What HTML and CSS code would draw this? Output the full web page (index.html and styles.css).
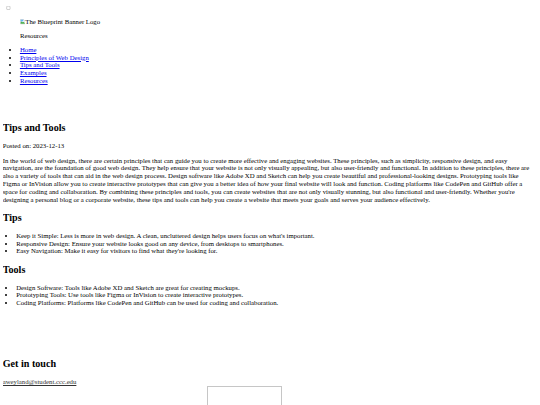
FILE: index.html
```html
<!DOCTYPE html>
<html lang="en">
<head>
<meta charset="utf-8">
<title>Tips and Tools</title>
<link rel="stylesheet" href="styles.css">
</head>
<body>
<header class="site-header">
  <input type="checkbox" class="menu-toggle" aria-label="Toggle menu">
  <p class="logo"><svg class="broken" viewBox="0 0 16 16" width="16" height="16" aria-hidden="true"><path d="M1.5 1.5h9l4 4v9h-13z" fill="#fff" stroke="#9a9a9a"/><path d="M2 14V10l3-3 3 3 2-2 4 4v2z" fill="#4caf50"/><path d="M2 2h8v5H2z" fill="#64b5f6"/></svg>The Blueprint Banner Logo</p>
  <p class="menu-title">Resources</p>
  <nav>
    <ul class="nav-list">
      <li><a href="#">Home</a></li>
      <li><a href="#">Principles of Web Design</a></li>
      <li><a href="#">Tips and Tools</a></li>
      <li><a href="#">Examples</a></li>
      <li><a href="#">Resources</a></li>
    </ul>
  </nav>
</header>
<main class="content">
  <h2 class="title">Tips and Tools</h2>
  <p>Posted on: 2023-12-13</p>
  <p>In the world of web design, there are certain principles that can guide you to create more effective and engaging websites. These principles, such as simplicity, responsive design, and easy navigation, are the foundation of good web design. They help ensure that your website is not only visually appealing, but also user-friendly and functional. In addition to these principles, there are also a variety of tools that can aid in the web design process. Design software like Adobe XD and Sketch can help you create beautiful and professional-looking designs. Prototyping tools like Figma or InVision allow you to create interactive prototypes that can give you a better idea of how your final website will look and function. Coding platforms like CodePen and GitHub offer a space for coding and collaboration. By combining these principles and tools, you can create websites that are not only visually stunning, but also functional and user-friendly. Whether you're designing a personal blog or a corporate website, these tips and tools can help you create a website that meets your goals and serves your audience effectively.</p>
  <h2>Tips</h2>
  <ul>
    <li>Keep it Simple: Less is more in web design. A clean, uncluttered design helps users focus on what's important.</li>
    <li>Responsive Design: Ensure your website looks good on any device, from desktops to smartphones.</li>
    <li>Easy Navigation: Make it easy for visitors to find what they're looking for.</li>
  </ul>
  <h2>Tools</h2>
  <ul>
    <li>Design Software: Tools like Adobe XD and Sketch are great for creating mockups.</li>
    <li>Prototyping Tools: Use tools like Figma or InVision to create interactive prototypes.</li>
    <li>Coding Platforms: Platforms like CodePen and GitHub can be used for coding and collaboration.</li>
  </ul>
</main>
<footer class="site-footer">
  <h2>Get in touch</h2>
  <p class="contact"><a class="email" href="mailto:aweyland@student.ccc.edu">aweyland@student.ccc.edu</a></p>
  <div class="map-box"></div>
</footer>
</body>
</html>
```

FILE: styles.css
```css
html {
  zoom: 0.3375;
}
body {
  margin: 8px;
  font-family: "Liberation Serif", "Times New Roman", serif;
  font-size: 20px;
  line-height: 23px;
  color: #000;
  background: #fff;
}
a {
  color: #0000ee;
}
p {
  margin: 20px 0;
}
.menu-toggle {
  display: block;
  margin: 9px 0 0 11px;
  width: 13px;
  height: 13px;
}
.logo {
  margin: 24px 0 0 51px;
}
.broken {
  width: 16px;
  height: 16px;
  vertical-align: -2px;
}
.menu-title {
  margin: 18px 0 0 51px;
}
.nav-list {
  margin: 18px 0 0;
  padding-left: 51px;
}
.content {
  margin-top: 111px;
}
h2 {
  font-size: 30px;
  line-height: 34.5px;
  margin: 25px 0;
}
.content h2.title {
  margin-top: 0;
}
.content ul {
  margin: 20px 0;
  padding-left: 40px;
}
.site-footer {
  margin-top: 152px;
}
.site-footer h2 {
  margin-top: 0;
}
.contact {
  margin: 25px 0 0;
}
.email {
  color: #333;
}
.map-box {
  margin: 0 0 0 605px;
  width: 222px;
  height: 150px;
  border: 3px solid #c6c6c6;
  box-sizing: border-box;
}
```
